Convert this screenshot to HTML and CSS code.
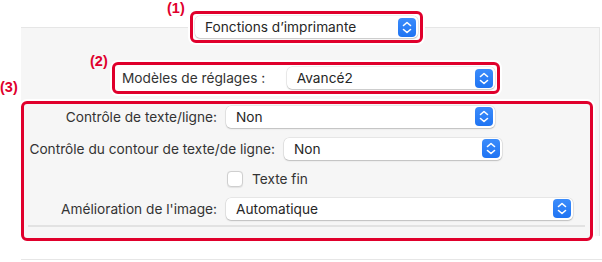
FILE: index.html
```html
<!DOCTYPE html>
<html lang="fr">
<head>
    <meta charset="UTF-8">
    <title>Fonctions d'imprimante</title>
    <link rel="stylesheet" href="styles.css">
</head>
<body>
    <div class="sheet">
        <div class="topbar">
            <div class="callout callout-1">
                <span class="tag tag-1">(1)</span>
                <div class="popup popup-main">
                    <span>Fonctions d’imprimante</span>
                    <span class="stepper"><svg width="18" height="19" viewBox="0 0 18 19"><path d="M5.5 7.5 L9 4.5 L12.5 7.5 M5.5 11.5 L9 14.5 L12.5 11.5" fill="none" stroke="#fff" stroke-width="1.6" stroke-linecap="round" stroke-linejoin="round"/></svg></span>
                </div>
            </div>
        </div>

        <div class="panel">
            <div class="callout callout-2">
                <span class="tag tag-2">(2)</span>
                <span class="label">Modèles de réglages :</span>
                <div class="popup popup-preset">
                    <span>Avancé2</span>
                    <span class="stepper"><svg width="18" height="19" viewBox="0 0 18 19"><path d="M5.5 7.5 L9 4.5 L12.5 7.5 M5.5 11.5 L9 14.5 L12.5 11.5" fill="none" stroke="#fff" stroke-width="1.6" stroke-linecap="round" stroke-linejoin="round"/></svg></span>
                </div>
            </div>

            <div class="callout callout-3">
                <span class="tag tag-3">(3)</span>
                <div class="row">
                    <span class="label label-short">Contrôle de texte/ligne:</span>
                    <div class="popup popup-text">
                        <span>Non</span>
                        <span class="stepper"><svg width="18" height="19" viewBox="0 0 18 19"><path d="M5.5 7.5 L9 4.5 L12.5 7.5 M5.5 11.5 L9 14.5 L12.5 11.5" fill="none" stroke="#fff" stroke-width="1.6" stroke-linecap="round" stroke-linejoin="round"/></svg></span>
                    </div>
                </div>
                <div class="row row-2">
                    <span class="label label-long">Contrôle du contour de texte/de ligne:</span>
                    <div class="popup popup-contour">
                        <span>Non</span>
                        <span class="stepper"><svg width="18" height="19" viewBox="0 0 18 19"><path d="M5.5 7.5 L9 4.5 L12.5 7.5 M5.5 11.5 L9 14.5 L12.5 11.5" fill="none" stroke="#fff" stroke-width="1.6" stroke-linecap="round" stroke-linejoin="round"/></svg></span>
                    </div>
                </div>
                <div class="row row-3">
                    <span class="checkbox"></span>
                    <span class="check-label">Texte fin</span>
                </div>
                <div class="row row-4">
                    <span class="label label-short">Amélioration de l'image:</span>
                    <div class="popup popup-image">
                        <span>Automatique</span>
                        <span class="stepper"><svg width="18" height="19" viewBox="0 0 18 19"><path d="M5.5 7.5 L9 4.5 L12.5 7.5 M5.5 11.5 L9 14.5 L12.5 11.5" fill="none" stroke="#fff" stroke-width="1.6" stroke-linecap="round" stroke-linejoin="round"/></svg></span>
                    </div>
                </div>
                <div class="divider"></div>
            </div>
        </div>

        <div class="foot"></div>
    </div>
</body>
</html>
```

FILE: styles.css
```css
body {
    margin: 0;
    background: #fff;
    font-family: Inter, "Noto Sans", sans-serif;
    font-size: 13.7px;
    color: #2b2b2b;
}
.sheet {
    width: 602px;
    height: 262px;
    padding-top: 11px;
    box-sizing: border-box;
    overflow: hidden;
}
.topbar {
    display: flex;
    padding-left: 190px;
    position: relative;
    z-index: 1;
}
.callout {
    position: relative;
    border: 3px solid #e0002c;
    border-radius: 6px;
    padding: 2px;
    box-shadow: 0 0 0 2px #fff;
    box-sizing: border-box;
}
.tag {
    position: absolute;
    font-family: "Liberation Sans", Arial, sans-serif;
    font-weight: bold;
    font-size: 14.5px;
    color: #e0002c;
    line-height: 16px;
}
.tag-1 { left: -26px; top: -14px; }
.tag-2 { left: -25px; top: -12px; }
.tag-3 { left: -24px; top: -25px; }

.callout-1 {
    width: 233px;
    height: 32px;
    background: #fff;
}
.popup {
    display: flex;
    align-items: center;
    justify-content: space-between;
    height: 22px;
    padding-left: 10px;
    padding-right: 2px;
    background: #fff;
    border-radius: 5px;
    box-shadow: 0 0 0 0.5px rgba(0, 0, 0, 0.12), 0 1px 1.5px rgba(0, 0, 0, 0.18);
    box-sizing: border-box;
    color: #262626;
}
.stepper {
    display: flex;
    width: 18px;
    height: 19px;
    border-radius: 4px;
    background: linear-gradient(#3b8cfb, #1f74f3);
}
.popup-main { width: 223px; }

.panel {
    display: flex;
    flex-direction: column;
    align-items: flex-start;
    margin-top: -16px;
    margin-left: 21px;
    width: 579px;
    padding-top: 35px;
    background: #f6f6f6;
    border-top: 1px solid #e6e6e6;
    border-right: 1px solid #e6e6e6;
    box-sizing: border-box;
}
.callout-2 {
    display: flex;
    align-items: center;
    margin-left: 91px;
    width: 388px;
    height: 32px;
    background: #fff;
    margin-top: -1px;
}
.callout-2 .label {
    padding-left: 5px;
    width: 167px;
}
.popup-preset { width: 211px; }

.callout-3 {
    margin-top: 7px;
    margin-bottom: -5px;
    width: 572px;
    padding: 1px 0 0 0;
    background: #f6f6f6;
}
.row {
    display: flex;
    align-items: center;
    height: 23px;
}
.row-2 { margin-top: 9px; }
.row-3 { margin-top: 7px; }
.row-4 { margin-top: 7px; }
.label {
    color: #333;
    white-space: nowrap;
}
.row .label {
    text-align: right;
    margin-right: 9px;
}
.label-short { width: 193px; }
.label-long { width: 251px; }
.popup-text { width: 269px; }
.popup-contour { width: 218px; }
.popup-image { width: 347px; }
.checkbox {
    margin-left: 203px;
    width: 14px;
    height: 14px;
    background: #fff;
    border-radius: 4px;
    border: 1px solid #cfcfcf;
    box-shadow: 0 0.5px 1px rgba(0, 0, 0, 0.08);
}
.check-label {
    margin-left: 9px;
    color: #333;
}
.divider {
    margin: 5px 5px 11px 4px;
    height: 2px;
    background: #e2e2e2;
}
.foot {
    margin-top: 23px;
    margin-left: 21px;
    height: 1px;
    background: #e6e6e6;
}
```
